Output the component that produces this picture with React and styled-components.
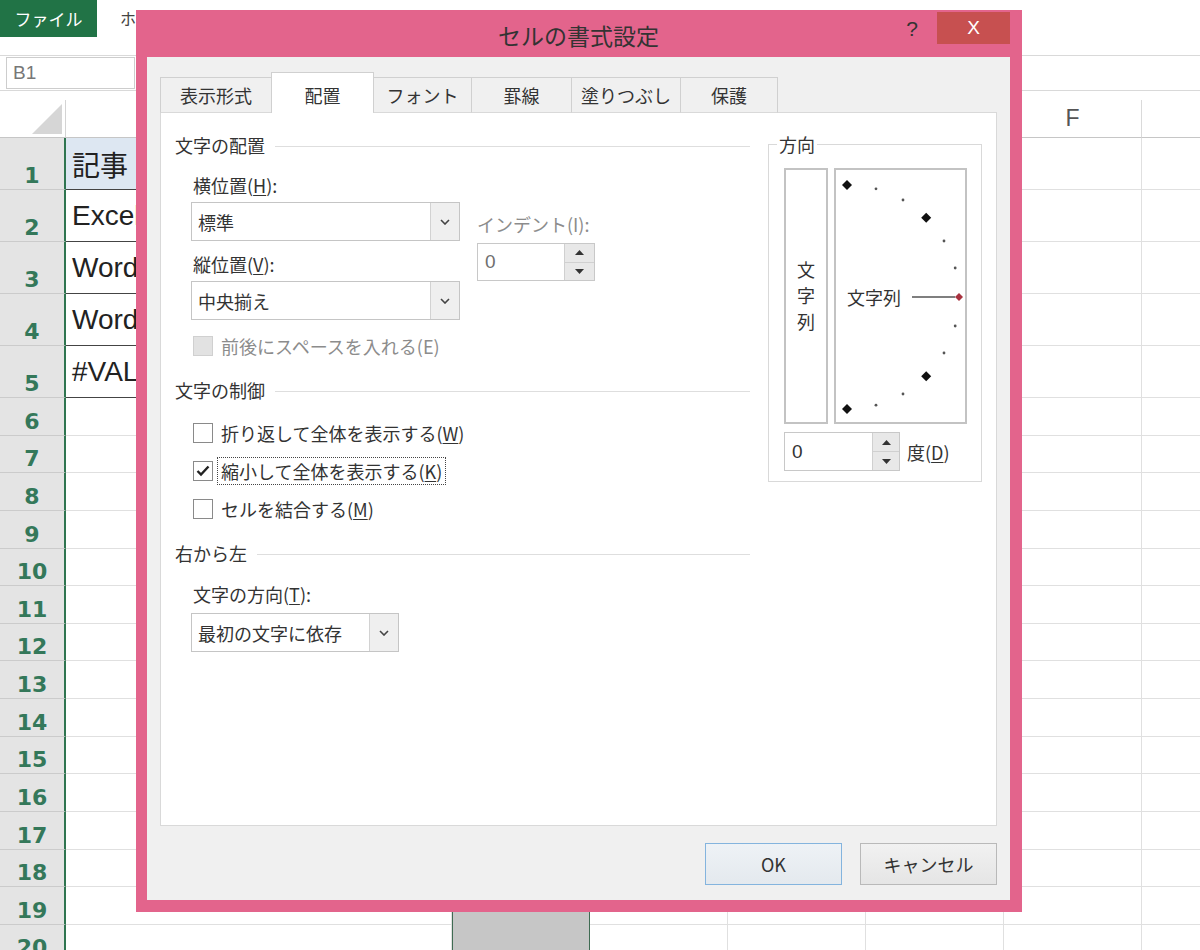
import React from "react";
import styled, { createGlobalStyle, css } from "styled-components";

const UI = `"Noto Sans CJK JP", "Noto Sans", sans-serif`;

const GlobalStyle = createGlobalStyle`
  *, *::before, *::after { box-sizing: border-box; }
  html, body { margin: 0; padding: 0; }
  body { background: #fff; font-family: ${UI}; color: #333; }
`;

const Page = styled.div`
  position: relative;
  width: 1200px;
  height: 950px;
  overflow: hidden;
  background: #fff;
`;

/* ---------- Excel background ---------- */
const Ribbon = styled.div`
  display: flex;
  height: 37px;
`;
const FileTab = styled.div`
  width: 97px;
  background: #217346;
  color: #fff;
  font-size: 17px;
  display: flex;
  align-items: center;
  justify-content: center;
`;
const RibbonTabs = styled.div`
  display: flex;
  margin-left: 11px;
`;
const RibbonTab = styled.div`
  padding: 10px 12px 0;
  font-size: 16px;
  line-height: 16px;
  color: #444;
  white-space: nowrap;
`;
const FormulaBar = styled.div`
  margin-top: 18px;
  height: 36px;
  border-top: 1px solid #d9d9d9;
  border-bottom: 1px solid #d9d9d9;
  display: flex;
  align-items: center;
  padding-left: 6px;
`;
const NameBox = styled.div`
  width: 129px;
  height: 32px;
  border: 1px solid #cdcdcd;
  font-family: "Liberation Sans", sans-serif;
  font-size: 19px;
  color: #777;
  display: flex;
  align-items: center;
  padding-left: 6px;
`;
const Sheet = styled.div`
  margin-top: 9px;
  display: grid;
  width: 1280px;
  grid-template-columns: 66px 386px repeat(6, 138px);
  grid-template-rows: 38px repeat(5, 52px) repeat(15, 37.64px);
`;
const Corner = styled.div`
  border-right: 1px solid #d4d4d4;
  border-bottom: 1px solid #c6c6c6;
  display: flex;
  align-items: flex-end;
  justify-content: flex-end;
  padding: 0 3px 3px 0;
`;
const ColHeader = styled.div`
  border-right: 1px solid #dadada;
  border-bottom: 1px solid #c6c6c6;
  display: flex;
  align-items: center;
  justify-content: center;
  font-family: "Liberation Sans", sans-serif;
  font-size: 23px;
  color: #555;
`;
const RowHeader = styled.div`
  background: #e4e4e4;
  border-bottom: 1px solid #cbcbcb;
  border-right: 2px solid #2f7550;
  display: flex;
  align-items: flex-end;
  justify-content: center;
  padding-bottom: 2px;
  font-family: "DejaVu Sans", sans-serif;
  font-weight: bold;
  font-size: 22px;
  line-height: 22px;
  color: #34785a;
`;
const Cell = styled.div`
  border-right: 1px solid #e0e0e0;
  border-bottom: 1px solid #e0e0e0;
  ${(p) =>
    p.$data &&
    css`
      border-right-color: #444;
      border-bottom-color: #444;
      background: ${p.$head ? "#dde7f2" : "#fff"};
      display: flex;
      align-items: center;
      padding-left: 6px;
      font-family: "Liberation Sans", "Noto Sans CJK JP", sans-serif;
      font-size: 28px;
      color: #222;
      white-space: nowrap;
      overflow: hidden;
    `}
`;
const SelBlock = styled.div`
  grid-column: 3;
  grid-row: 20 / span 2;
  background: #c6c6c6;
  border-left: 1px solid #3f6b52;
  border-right: 1px solid #3f6b52;
`;

/* ---------- Dialog ---------- */
const Dialog = styled.div`
  position: absolute;
  left: 136px;
  top: 10px;
  width: 886px;
  height: 902px;
  background: #e3648c;
  padding: 0 12px 12px 11px;
  display: flex;
  flex-direction: column;
  font-family: ${UI};
  color: #333;
`;
const TitleBar = styled.div`
  height: 47px;
  flex: none;
  display: grid;
  grid-template-columns: 1fr auto 1fr;
  align-items: start;
`;
const Title = styled.div`
  grid-column: 2;
  font-size: 23px;
  line-height: 23px;
  padding-top: 14px;
  color: #333;
`;
const WinControls = styled.div`
  grid-column: 3;
  justify-self: end;
  display: flex;
  align-items: flex-start;
`;
const HelpBtn = styled.div`
  font-family: "Liberation Sans", sans-serif;
  font-size: 21px;
  line-height: 21px;
  margin-top: 8px;
  margin-right: 19px;
  color: #333;
`;
const CloseBtn = styled.div`
  width: 73px;
  height: 32px;
  margin-top: 2px;
  background: #c75050;
  color: #fff;
  display: flex;
  align-items: center;
  justify-content: center;
  font-family: "Liberation Sans", sans-serif;
  font-size: 19px;
`;
const Body = styled.div`
  flex: 1;
  background: #f0f0f0;
  padding: 15px 13px 15px 13px;
  display: flex;
  flex-direction: column;
`;
const TabStrip = styled.div`
  display: flex;
  align-items: flex-end;
  height: 41px;
  margin-bottom: -1px;
  position: relative;
  z-index: 1;
`;
const Tab = styled.div`
  width: ${(p) => p.$w}px;
  height: ${(p) => (p.$active ? 41 : 36)}px;
  margin-right: -1px;
  border: 1px solid #d0d0d0;
  border-bottom: ${(p) => (p.$active ? "none" : "1px solid #d9d9d9")};
  background: ${(p) => (p.$active ? "#fff" : "#f0f0f0")};
  display: flex;
  align-items: center;
  justify-content: center;
  padding-top: ${(p) => (p.$active ? 4 : 0)}px;
  font-size: 18px;
  line-height: 24px;
  color: #333;
  white-space: nowrap;
`;
const Panel = styled.div`
  height: 714px;
  flex: none;
  background: #fff;
  border: 1px solid #d9d9d9;
  display: flex;
  align-items: flex-start;
  padding: 20px 0 0 14px;
  gap: 18px;
`;
const LeftCol = styled.div`
  width: 575px;
  display: flex;
  flex-direction: column;
`;
const SectionHeader = styled.div`
  display: flex;
  align-items: center;
  gap: 10px;
  font-size: 18px;
  line-height: 24px;
  color: #333;
  margin-top: ${(p) => p.$mt || 0}px;
  &::after {
    content: "";
    flex: 1;
    height: 1px;
    background: #dedede;
    margin-top: 3px;
  }
`;
const SectionBody = styled.div`
  padding-left: 18px;
  display: flex;
  flex-direction: column;
`;
const AlignGrid = styled.div`
  display: grid;
  grid-template-columns: 269px 118px;
  column-gap: 15px;
  margin-top: 16px;
  align-items: start;
`;
const FieldCol = styled.div`
  display: flex;
  flex-direction: column;
  margin-top: ${(p) => p.$mt || 0}px;
`;
const FieldLabel = styled.div`
  font-size: 18px;
  line-height: 24px;
  color: ${(p) => (p.$disabled ? "#8c8c8c" : "#333")};
  margin-top: ${(p) => p.$mt || 0}px;
  white-space: nowrap;
`;
const U = styled.span`
  text-decoration: underline;
  text-underline-offset: 2px;
`;
const Select = styled.div`
  width: ${(p) => p.$w}px;
  height: 39px;
  margin-left: -2px;
  margin-top: ${(p) => p.$mt || 0}px;
  border: 1px solid #c5c5c5;
  background: #fff;
  display: flex;
  align-items: stretch;
`;
const SelectValue = styled.div`
  flex: 1;
  display: flex;
  align-items: center;
  padding-left: 6px;
  font-size: 18px;
  color: #333;
  white-space: nowrap;
`;
const SelectArrow = styled.div`
  width: 29px;
  border-left: 1px solid #d2d2d2;
  background: #efefef;
  display: flex;
  align-items: center;
  justify-content: center;
`;
const Spin = styled.div`
  width: ${(p) => p.$w}px;
  height: ${(p) => p.$h}px;
  margin-top: ${(p) => p.$mt || 0}px;
  border: 1px solid #c8c8c8;
  background: #fff;
  display: flex;
  color: ${(p) => (p.$disabled ? "#6f6f6f" : "#333")};
`;
const SpinValue = styled.div`
  flex: 1;
  display: flex;
  align-items: center;
  padding-left: 7px;
  font-family: "Liberation Sans", sans-serif;
  font-size: 19px;
`;
const SpinButtons = styled.div`
  width: ${(p) => p.$bw}px;
  display: flex;
  flex-direction: column;
  border-left: 1px solid #d0d0d0;
`;
const SpinBtn = styled.div`
  flex: 1;
  background: #e8e8e8;
  display: flex;
  align-items: center;
  justify-content: center;
  & + & {
    border-top: 1px solid #d0d0d0;
  }
`;
const CheckRow = styled.div`
  display: flex;
  align-items: center;
  height: 24px;
  gap: 4px;
  margin-top: ${(p) => p.$mt || 0}px;
`;
const Box = styled.div`
  width: 20px;
  height: 20px;
  flex: none;
  border: 1px solid ${(p) => (p.$disabled ? "#d0d0d0" : "#8a8a8a")};
  background: ${(p) => (p.$disabled ? "#e2e2e2" : "#fff")};
  display: flex;
  align-items: center;
  justify-content: center;
`;
const CheckLabel = styled.span`
  font-size: 18px;
  line-height: 24px;
  padding: 1px 3px;
  border: 1px dotted ${(p) => (p.$focus ? "#444" : "transparent")};
  color: ${(p) => (p.$disabled ? "#8c8c8c" : "#333")};
  white-space: nowrap;
`;
const Group = styled.fieldset`
  width: 214px;
  margin: 0;
  padding: 0;
  border: 1px solid #d9d9d9;
  min-width: 0;
`;
const Legend = styled.legend`
  margin-left: 8px;
  padding: 0 2px;
  font-size: 18px;
  line-height: 22px;
  color: #333;
`;
const GroupInner = styled.div`
  padding: 13px 14px 10px 15px;
`;
const DirRow = styled.div`
  display: flex;
  gap: 6px;
`;
const VertBox = styled.div`
  width: 44px;
  height: 256px;
  border: 2px solid #c3c3c3;
  display: flex;
  align-items: center;
  justify-content: center;
`;
const VertText = styled.span`
  writing-mode: vertical-rl;
  text-orientation: upright;
  font-size: 18px;
  line-height: 24px;
  letter-spacing: 8px;
  padding-top: 8px;
  color: #333;
`;
const DialBox = styled.div`
  position: relative;
  width: 133px;
  height: 256px;
  border: 2px solid #c3c3c3;
  background: #fff;
`;
const DialSvg = styled.svg`
  position: absolute;
  left: 0;
  top: 0;
`;
const DialText = styled.span`
  position: absolute;
  left: 11px;
  top: 115px;
  font-size: 18px;
  line-height: 24px;
  color: #333;
  white-space: nowrap;
`;
const DegreeRow = styled.div`
  display: flex;
  align-items: center;
  gap: 7px;
  margin-top: 8px;
`;
const DegreeLabel = styled.span`
  font-size: 18px;
  line-height: 24px;
  color: #333;
`;
const ButtonRow = styled.div`
  display: flex;
  justify-content: flex-end;
  gap: 18px;
  margin-top: 17px;
`;
const Button = styled.button`
  width: 137px;
  height: 42px;
  margin: 0;
  padding: 0;
  font-family: ${UI};
  font-size: 18px;
  color: #333;
  border: 1px solid ${(p) => (p.$default ? "#84b4de" : "#b9b9b9")};
  background: ${(p) =>
    p.$default
      ? "linear-gradient(#eef2f6, #e4e9ee)"
      : "linear-gradient(#f1f1f1, #e5e5e5)"};
  display: flex;
  align-items: center;
  justify-content: center;
`;

/* ---------- small drawings ---------- */
const Chevron = () => (
  <svg width="10" height="6" viewBox="0 0 10 6">
    <polyline points="1,1 5,5 9,1" fill="none" stroke="#444" strokeWidth="1.6" />
  </svg>
);
const UpTri = () => (
  <svg width="9" height="5" viewBox="0 0 9 5">
    <polygon points="0,5 4.5,0 9,5" fill="#333" />
  </svg>
);
const DownTri = () => (
  <svg width="9" height="5" viewBox="0 0 9 5">
    <polygon points="0,0 4.5,5 9,0" fill="#333" />
  </svg>
);
const CheckMark = () => (
  <svg width="14" height="12" viewBox="0 0 14 12">
    <polyline points="1.5,6 5,9.5 12.5,1.5" fill="none" stroke="#222" strokeWidth="2.4" />
  </svg>
);

const SpinBox = ({ w, h, bw, disabled, mt }) => (
  <Spin $w={w} $h={h} $disabled={disabled} $mt={mt}>
    <SpinValue>0</SpinValue>
    <SpinButtons $bw={bw}>
      <SpinBtn>
        <UpTri />
      </SpinBtn>
      <SpinBtn>
        <DownTri />
      </SpinBtn>
    </SpinButtons>
  </Spin>
);

const Dial = () => {
  const cx = 11;
  const cy = 127;
  const r = 112;
  const pts = [];
  for (let a = -90; a <= 90; a += 15) {
    const rad = (a * Math.PI) / 180;
    pts.push({ a, x: cx + r * Math.cos(rad), y: cy - r * Math.sin(rad) });
  }
  const diamond = (x, y, s) => `${x},${y - s} ${x + s},${y} ${x},${y + s} ${x - s},${y}`;
  return (
    <DialSvg width="129" height="252" viewBox="0 0 129 252">
      <line x1="76" y1={cy} x2="119" y2={cy} stroke="#555" strokeWidth="1.4" />
      {pts.map((p) => {
        if (p.a === 0) return <polygon key={p.a} points={diamond(p.x, p.y, 4)} fill="#a8323f" />;
        if (Math.abs(p.a) === 90 || Math.abs(p.a) === 45)
          return <polygon key={p.a} points={diamond(p.x, p.y, 5)} fill="#111" />;
        return <circle key={p.a} cx={p.x} cy={p.y} r="1.4" fill="#555" />;
      })}
    </DialSvg>
  );
};

const rows = Array.from({ length: 20 }, (_, i) => i + 1);
const cols = ["A", "B", "C", "D", "E", "F", "G"];
const dataA = { 1: "記事", 2: "Excel", 3: "Word", 4: "Word", 5: "#VALUE!" };
const tabs = [
  { label: "表示形式", w: 112 },
  { label: "配置", w: 103, active: true },
  { label: "フォント", w: 99 },
  { label: "罫線", w: 101 },
  { label: "塗りつぶし", w: 110 },
  { label: "保護", w: 98 },
];

export default function App() {
  return (
    <Page>
      <GlobalStyle />
      <Ribbon>
        <FileTab>ファイル</FileTab>
        <RibbonTabs>
          <RibbonTab>ホーム</RibbonTab>
        </RibbonTabs>
      </Ribbon>
      <FormulaBar>
        <NameBox>B1</NameBox>
      </FormulaBar>
      <Sheet>
        <Corner>
          <svg width="30" height="30" viewBox="0 0 30 30">
            <polygon points="0,30 30,0 30,30" fill="#d6d6d6" />
          </svg>
        </Corner>
        {cols.map((c) => (
          <ColHeader key={c}>{c === "G" ? "" : c}</ColHeader>
        ))}
        {rows.map((r) => (
          <React.Fragment key={r}>
            <RowHeader>{r}</RowHeader>
            {cols.map((c) => {
              if (c === "B" && (r === 19 || r === 20)) return null;
              if (c === "A" && dataA[r])
                return (
                  <Cell key={c} $data $head={r === 1}>
                    {dataA[r]}
                  </Cell>
                );
              return <Cell key={c} />;
            })}
          </React.Fragment>
        ))}
        <SelBlock />
      </Sheet>

      <Dialog>
        <TitleBar>
          <Title>セルの書式設定</Title>
          <WinControls>
            <HelpBtn>?</HelpBtn>
            <CloseBtn>X</CloseBtn>
          </WinControls>
        </TitleBar>
        <Body>
          <TabStrip>
            {tabs.map((t) => (
              <Tab key={t.label} $w={t.w} $active={t.active}>
                {t.label}
              </Tab>
            ))}
          </TabStrip>
          <Panel>
            <LeftCol>
              <SectionHeader>文字の配置</SectionHeader>
              <SectionBody>
                <AlignGrid>
                  <FieldCol>
                    <FieldLabel>
                      横位置(<U>H</U>):
                    </FieldLabel>
                    <Select $w={269} $mt={5}>
                      <SelectValue>標準</SelectValue>
                      <SelectArrow>
                        <Chevron />
                      </SelectArrow>
                    </Select>
                    <FieldLabel $mt={11}>
                      縦位置(<U>V</U>):
                    </FieldLabel>
                    <Select $w={269} $mt={5}>
                      <SelectValue>中央揃え</SelectValue>
                      <SelectArrow>
                        <Chevron />
                      </SelectArrow>
                    </Select>
                    <CheckRow $mt={14}>
                      <Box $disabled />
                      <CheckLabel $disabled>前後にスペースを入れる(E)</CheckLabel>
                    </CheckRow>
                  </FieldCol>
                  <FieldCol $mt={39}>
                    <FieldLabel $disabled>インデント(I):</FieldLabel>
                    <SpinBox w={118} h={38} bw={30} disabled mt={7} />
                  </FieldCol>
                </AlignGrid>
              </SectionBody>

              <SectionHeader $mt={20}>文字の制御</SectionHeader>
              <SectionBody>
                <CheckRow $mt={19}>
                  <Box />
                  <CheckLabel>
                    折り返して全体を表示する(<U>W</U>)
                  </CheckLabel>
                </CheckRow>
                <CheckRow $mt={14}>
                  <Box>
                    <CheckMark />
                  </Box>
                  <CheckLabel $focus>
                    縮小して全体を表示する(<U>K</U>)
                  </CheckLabel>
                </CheckRow>
                <CheckRow $mt={14}>
                  <Box />
                  <CheckLabel>
                    セルを結合する(<U>M</U>)
                  </CheckLabel>
                </CheckRow>
              </SectionBody>

              <SectionHeader $mt={20}>右から左</SectionHeader>
              <SectionBody>
                <FieldLabel $mt={17}>
                  文字の方向(<U>T</U>):
                </FieldLabel>
                <Select $w={208} $mt={7}>
                  <SelectValue>最初の文字に依存</SelectValue>
                  <SelectArrow>
                    <Chevron />
                  </SelectArrow>
                </Select>
              </SectionBody>
            </LeftCol>

            <Group>
              <Legend>方向</Legend>
              <GroupInner>
                <DirRow>
                  <VertBox>
                    <VertText>文字列</VertText>
                  </VertBox>
                  <DialBox>
                    <Dial />
                    <DialText>文字列</DialText>
                  </DialBox>
                </DirRow>
                <DegreeRow>
                  <SpinBox w={116} h={39} bw={27} />
                  <DegreeLabel>
                    度(<U>D</U>)
                  </DegreeLabel>
                </DegreeRow>
              </GroupInner>
            </Group>
          </Panel>
          <ButtonRow>
            <Button $default>OK</Button>
            <Button>キャンセル</Button>
          </ButtonRow>
        </Body>
      </Dialog>
    </Page>
  );
}
